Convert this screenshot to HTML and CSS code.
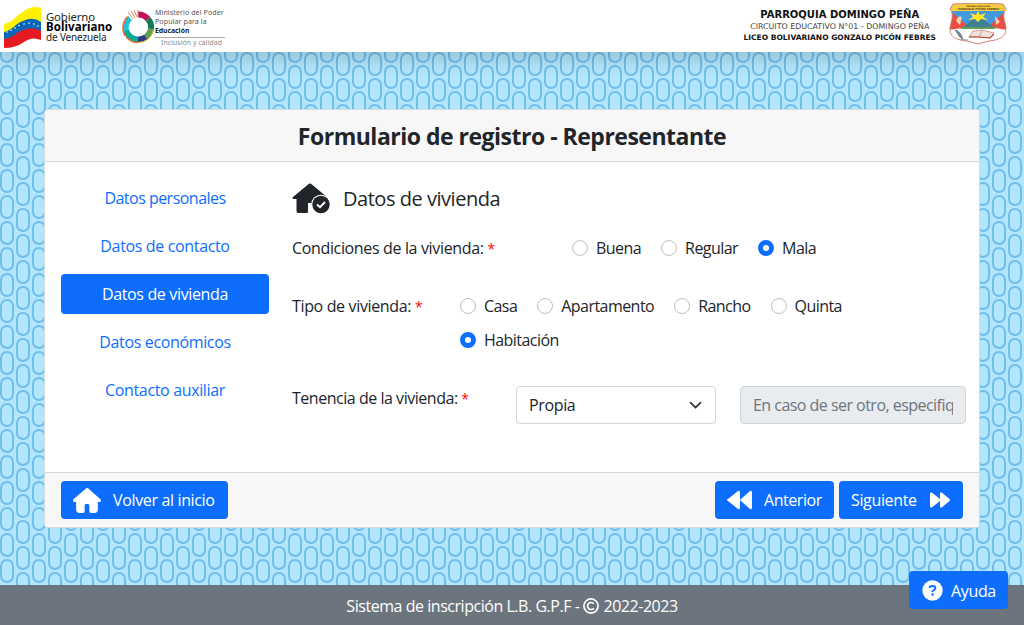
FILE: index.html
```html
<!DOCTYPE html>
<html lang="es">
<head>
<meta charset="utf-8">
<title>Formulario de registro - Representante</title>
<link rel="stylesheet" href="styles.css">
</head>
<body>
<svg class="backdrop" width="1024" height="625" aria-hidden="true">
  <defs>
    <pattern id="links" width="32" height="26" patternUnits="userSpaceOnUse">
      <rect width="32" height="26" fill="#b3e5fc"/>
      <g fill="none" stroke="#6dbfec" stroke-width="2">
        <rect x="1" y="14" width="12" height="22" rx="6"/>
        <rect x="1" y="-12" width="12" height="22" rx="6"/>
        <rect x="17" y="1" width="12" height="22" rx="6"/>
      </g>
    </pattern>
  </defs>
  <rect width="1024" height="625" fill="url(#links)"/>
</svg>

<header class="topbar">
  <div class="brand">
    <svg class="flag" width="38" height="42" viewBox="0 0 38 42">
      <path d="M0 17C10 15 12 8 20 4Q28-2 37 1V17Q27 13 19 19T0 28Z" fill="#fff005"/>
      <path d="M0 25C9 23 12 16 19 14Q29 9 37 15V25Q28 21 20 27T0 34Z" fill="#0866b9"/>
      <path d="M0 32C9 31 12 25 19 23Q29 19 37 24V33Q28 29 20 35T0 41Z" fill="#e51b23"/>
      <g fill="#fff"><circle cx="3" cy="25" r=".8"/><circle cx="7" cy="23.300" r=".8"/><circle cx="11" cy="21" r=".8"/><circle cx="15" cy="18.500" r=".8"/><circle cx="20" cy="17" r=".8"/><circle cx="25" cy="16.200" r=".8"/><circle cx="30" cy="17" r=".8"/><circle cx="34" cy="19" r=".8"/></g>
    </svg>
    <div class="gob"><span class="g1">Gobierno</span><b>Bolivariano</b><span class="g3">de Venezuela</span></div>
    <svg class="ring" width="33" height="34" viewBox="0 0 33 34">
      <g fill="none" stroke-width="6">
        <path d="M16 4.500A12.500 12.500 0 0 1 26 9" stroke="#c11358"/>
        <path d="M26 9A12.500 12.500 0 0 1 29 19" stroke="#147a55"/>
        <path d="M29 19A12.500 12.500 0 0 1 24 27" stroke="#5d9f4b"/>
        <path d="M24 27A12.500 12.500 0 0 1 16 29.500" stroke="#303a80"/>
        <path d="M16 29.500A12.500 12.500 0 0 1 4 20" stroke="#08a99b"/>
        <path d="M4 20A12.500 12.500 0 0 1 8 8" stroke="#25bdd7"/>
      </g>
      <path d="M5 7Q-2 17 3 26M4 27Q10 33 16 32.500" fill="none" stroke="#f26b22" stroke-width="1.500"/>
      <path d="M16 32.500Q28 32 31.500 20" fill="none" stroke="#e6bb25" stroke-width="1"/>
      <path d="M6 2L11 9M9 1L13 8M12 0L15 7M16 0V7" fill="none" stroke="#e78669" stroke-width="1"/>
    </svg>
    <div class="min"><span class="m1">Ministerio del Poder</span><span class="m2">Popular para la</span><b>Educación</b><span class="m4">Inclusión y calidad</span></div>
  </div>
  <div class="school">
    <div class="lines"><b class="s1">PARROQUIA DOMINGO PEÑA</b><span class="s2">CIRCUITO EDUCATIVO N°01 - DOMINGO PEÑA</span><b class="s3">LICEO BOLIVARIANO GONZALO PICÓN FEBRES</b></div>
    <svg class="crest" width="58" height="42" viewBox="0 0 58 42">
      <defs><clipPath id="shield"><path d="M4 1Q29-1 54 1L57 6Q53 10 56 20C60 33 51 37 40 38L29 41L18 38C6 37-2 33 2 20Q5 10 1 6Z"/></clipPath></defs>
      <g clip-path="url(#shield)">
        <rect width="58" height="42" fill="#fff"/>
        <path d="M0 8H58V25H0Z" fill="#4498dd"/>
        <path d="M0 7L20 24L0 27ZM58 7L39 24L58 27Z" fill="#e94e43"/>
        <path d="M13 25L23 17L29 14L35 17L46 25Z" fill="#407e91"/>
        <path d="M29 8L31 12L37 10L34 14L39 17L32 16L29 19L26 16L19 17L24 14L21 10L27 12Z" fill="#ffe52b"/>
        <path d="M0 0H58V8H0Z" fill="#f4cf42"/>
        <path d="M12 25H46" stroke="#5b9e55" stroke-width="2"/>
        <path d="M7 18Q9 12 13 14L11 22ZM46 13L51 19L47 22Z" fill="#efd0ad"/>
        <path d="M6 27Q12 28 14 37L10 33ZM10 37H19" fill="#7b8992" stroke="#7b8992" stroke-width="1"/>
        <path d="M24 28L33 27L45 30L41 35L30 34L20 34Z" fill="#f3e3d8" stroke="#c9837c" stroke-width=".8"/>
        <path d="M20 34L30 34L41 35L45 31" fill="none" stroke="#b8483f" stroke-width="1.200"/>
        <path d="M33 28L30 34" stroke="#a88d82" stroke-width=".8"/>
      </g>
      <path d="M4 1Q29-1 54 1L57 6Q53 10 56 20C60 33 51 37 40 38L29 41L18 38C6 37-2 33 2 20Q5 10 1 6Z" fill="none" stroke="#d78378"/>
      <text x="17" y="3.800" class="crest-a">UNIDAD EDUCATIVA</text><text x="8" y="7" class="crest-b">"GONZALO PICÓN FEBRES"</text>
    </svg>
  </div>
</header>

<main class="card">
  <h1 class="card-head"><span>Formulario de registro - Representante</span></h1>
  <div class="card-body">
    <nav class="tabs">
      <a class="tight">Datos personales</a><a>Datos de contacto</a><a class="active">Datos de vivienda</a><a>Datos económicos</a><a>Contacto auxiliar</a>
    </nav>
    <section class="panel">
      <h2 class="title">
        <svg width="38" height="31" viewBox="0 0 38 31"><path d="M17 .7Q18 .2 19 .7L35 14H31Q26 11 21 17L20 20H16V29Q16 30 14.500 30H6Q4.500 30 4.500 28V16H1.500Q-.5 15.500 1 14Z" fill="#212529"/><circle cx="29" cy="21.500" r="9.800" fill="#fff"/><circle cx="29" cy="21.500" r="8.700" fill="#212529"/><path d="M25 21.500L28 24.200L33 19" fill="none" stroke="#fff" stroke-width="1.900"/></svg>
        <span>Datos de vivienda</span>
      </h2>
      <div class="row conditions">
        <span class="label">Condiciones de la vivienda: <i>*</i></span>
        <div class="options"><label><span class="radio"></span>Buena</label><label><span class="radio"></span>Regular</label><label><span class="radio on"></span>Mala</label></div>
      </div>
      <div class="row kind">
        <span class="label">Tipo de vivienda: <i>*</i></span>
        <div class="options"><label><span class="radio"></span>Casa</label><label><span class="radio"></span>Apartamento</label><label><span class="radio"></span>Rancho</label><label><span class="radio"></span>Quinta</label><label><span class="radio on"></span>Habitación</label></div>
      </div>
      <div class="row tenure">
        <span class="label">Tenencia de la vivienda: <i>*</i></span>
        <div class="select"><span>Propia</span><svg width="16" height="16" viewBox="0 0 16 16"><path d="M3.500 5.700L8.500 10.700L13.500 5.700" fill="none" stroke="#343a40" stroke-width="1.800" stroke-linecap="round" stroke-linejoin="round"/></svg></div>
        <input class="field" type="text" placeholder="En caso de ser otro, especifique" disabled>
      </div>
    </section>
  </div>
  <div class="card-foot">
    <a class="btn home"><svg width="28" height="25" viewBox="0 0 576 512" preserveAspectRatio="none"><path fill="#fff" d="M575.800 255.500c0 18-15 32.100-32 32.100h-32l.7 160.200c0 35-28 64.200-64 64.200H376c-22.100 0-40-17.900-40-40V360c0-17.700-14.300-32-32-32h-32c-17.700 0-32 14.300-32 32v112c0 22.100-17.900 40-40 40h-72c-35.300 0-64-28.700-64-64V287.600H32c-18 0-32-14-32-32.100 0-9 3-17 10-24L266.400 8c7-7 15-8 22-8s15 2 21 7l255.400 224.500c8 7 12 15 11 24z" transform="scale(.999)"/></svg><span>Volver al inicio</span></a>
    <div class="pager">
      <a class="btn prev"><svg width="25" height="20" viewBox="0 0 25 20"><path fill="#fff" d="M0 9Q-.2 10 1 11L11 19Q13 20 13 17V3Q13 0 11 1L1 9ZM13.500 9Q13 10 14 11L23 19Q25 20 25 17V3Q25 0 23 1L14 9Z"/></svg><span>Anterior</span></a>
      <a class="btn next"><span>Siguiente</span><svg width="20" height="16" viewBox="0 0 20 16"><path fill="#fff" d="M0 2Q0-.5 2 .7L10 7V2Q10-.5 12 .7L19.500 7Q20.500 8 19.500 9L12 15.300Q10 16.500 10 14V9L2 15.300Q0 16.500 0 14Z"/></svg></a>
    </div>
  </div>
</main>

<footer class="footer"><span class="f1">Sistema de inscripción L.B. G.P.F -</span><svg width="16" height="16" viewBox="0 0 16 16"><circle cx="8" cy="8" r="7.100" fill="none" stroke="#fff" stroke-width="1.700"/><path d="M10.800 5.800A3.500 3.500 0 1 0 10.800 10.200" fill="none" stroke="#fff" stroke-width="1.700"/></svg><span class="f2">2022-2023</span></footer>
<a class="btn help"><svg width="21" height="21" viewBox="0 0 21 21"><circle cx="10.500" cy="10.500" r="10.200" fill="#fff"/><path d="M7.600 8Q7.800 6 10 6H11Q13.500 6.200 13.400 8.300Q13.200 9.800 10.600 11V12" fill="none" stroke="#0d6efd" stroke-width="1.900"/><circle cx="10.600" cy="14.500" r="1.250" fill="#0d6efd"/></svg><span>Ayuda</span></a>
</body>
</html>
```
FILE: styles.css
```css
* { box-sizing: border-box; }
body { margin: 0; width: 1024px; height: 625px; overflow: hidden; display: flex; flex-direction: column; color: #212529; font: 16px/24px "Open Sans", "Noto Sans", sans-serif; letter-spacing: -.35px; }
svg { display: block; flex: none; }
.backdrop { position: absolute; inset: 0; z-index: -1; }
.topbar { height: 52px; flex: none; background: #fff; box-shadow: 0 8px 16px rgba(0,0,0,.15); display: flex; justify-content: space-between; }
.brand { display: flex; padding-left: 4px; white-space: nowrap; }
.flag { margin-top: 7px; }
.gob { width: 75px; margin: 12px 0 0 4px; display: flex; flex-direction: column; font: 11.300px/10px "Noto Sans", sans-serif; letter-spacing: -.1px; color: #222; }
.gob b { color: #000; font-size: 11.500px; letter-spacing: .1px; }
.gob .g3 { font-size: 10px; letter-spacing: -.15px; }
.ring { margin: 10px 0 0 1px; }
.min { margin: 8px 0 0 0; width: 70px; display: flex; flex-direction: column; font: 7px/9.200px "Noto Sans", sans-serif; letter-spacing: .12px; color: #555; }
.min b { color: #222; font-size: 6.800px; letter-spacing: 0; }
.m4 { border-top: 1px solid #aaa; margin-top: 1px; padding-left: 6px; color: #888; font-size: 6.800px; }
.school { display: flex; padding-right: 17px; }
.lines { display: flex; flex-direction: column; align-items: center; margin: 9px 13px 0 0; white-space: nowrap; font: 7.900px/11px "DejaVu Sans", sans-serif; letter-spacing: 0; color: #111; }
.s1 { font-size: 10px; line-height: 12px; }
.s2 { color: #444; }
.s3 { font-size: 7.500px; }
.crest { margin-top: 3px; }
.crest-a, .crest-b { font: bold 2.200px "DejaVu Sans", sans-serif; letter-spacing: 0; fill: #5c3720; }
.crest-b { font-size: 2.900px; }
.card { width: 936px; height: 419px; margin: 57px 0 0 44px; flex: none; background: #fff; border: 1px solid #d3dbe0; border-radius: 4px; display: flex; flex-direction: column; overflow: hidden; }
.card-head { margin: 0; height: 52px; background: #f7f7f7; border-bottom: 1px solid #d8d8d8; text-align: center; font-size: 23px; line-height: 53px; font-weight: 700; letter-spacing: -.5px; }
.card-body { height: 310px; display: flex; padding: 16px 13px 0 16px; }
.tabs { width: 208px; display: flex; flex-direction: column; gap: 8px; text-align: center; color: #0d6efd; }
.tabs a { height: 40px; line-height: 41px; border-radius: 4px; }
.tabs .tight { letter-spacing: -.52px; }
.tabs .active { background: #0d6efd; color: #fff; }
.panel { margin-left: 23px; width: 674px; }
.title { display: flex; margin: 5px 0 0; height: 31px; gap: 13px; font-size: 20px; line-height: 31px; font-weight: 400; letter-spacing: -.47px; }
.row { display: flex; white-space: nowrap; }
.label i { color: #f00; font-style: normal; font-size: 14px; line-height: 1; }
.conditions { margin-top: 22px; height: 58px; }
.conditions .label { width: 280px; }
.options { display: flex; flex-wrap: wrap; align-content: flex-start; column-gap: 20px; row-gap: 10px; letter-spacing: -.55px; }
.options label { display: flex; align-items: center; gap: 8px; height: 24px; }
.radio { width: 16px; height: 16px; border: 1px solid #bfbfbf; border-radius: 50%; background: #fff; }
.radio.on { border: 5px solid #0d6efd; }
.kind { height: 92px; }
.kind .label { width: 168px; }
.kind .options { width: 400px; }
.tenure { align-items: flex-start; }
.tenure .label { width: 224px; letter-spacing: -.47px; }
.select, .field { height: 38px; border: 1px solid #ced4da; border-radius: 4px; padding: 0 12px; }
.select { width: 200px; display: flex; align-items: center; justify-content: space-between; margin-right: 24px; }
.field { width: 226px; background: #e9ecef; font: inherit; letter-spacing: -.53px; }
.field::placeholder { color: #6c757d; opacity: 1; }
.card-foot { flex: 1; border-top: 1px solid #d8d8d8; background: #f7f7f7; display: flex; justify-content: space-between; padding: 8px 16px; }
.pager { display: flex; gap: 5px; }
.btn { height: 38px; border-radius: 4px; background: #0d6efd; color: #fff; display: flex; align-items: center; padding: 0 12px; white-space: nowrap; }
.home { width: 167px; gap: 12px; }
.prev { width: 119px; gap: 12px; letter-spacing: -.45px; }
.next { width: 124px; gap: 13px; }
.footer { margin-top: auto; flex: none; height: 40px; background: #6c757d; color: #fff; display: flex; align-items: center; justify-content: center; gap: 4px; padding-top: 2px; letter-spacing: -.46px; }
.help { position: absolute; left: 909px; top: 571px; width: 99px; gap: 8px; padding-left: 13px; }
.help span { padding-top: 2px; }
```
